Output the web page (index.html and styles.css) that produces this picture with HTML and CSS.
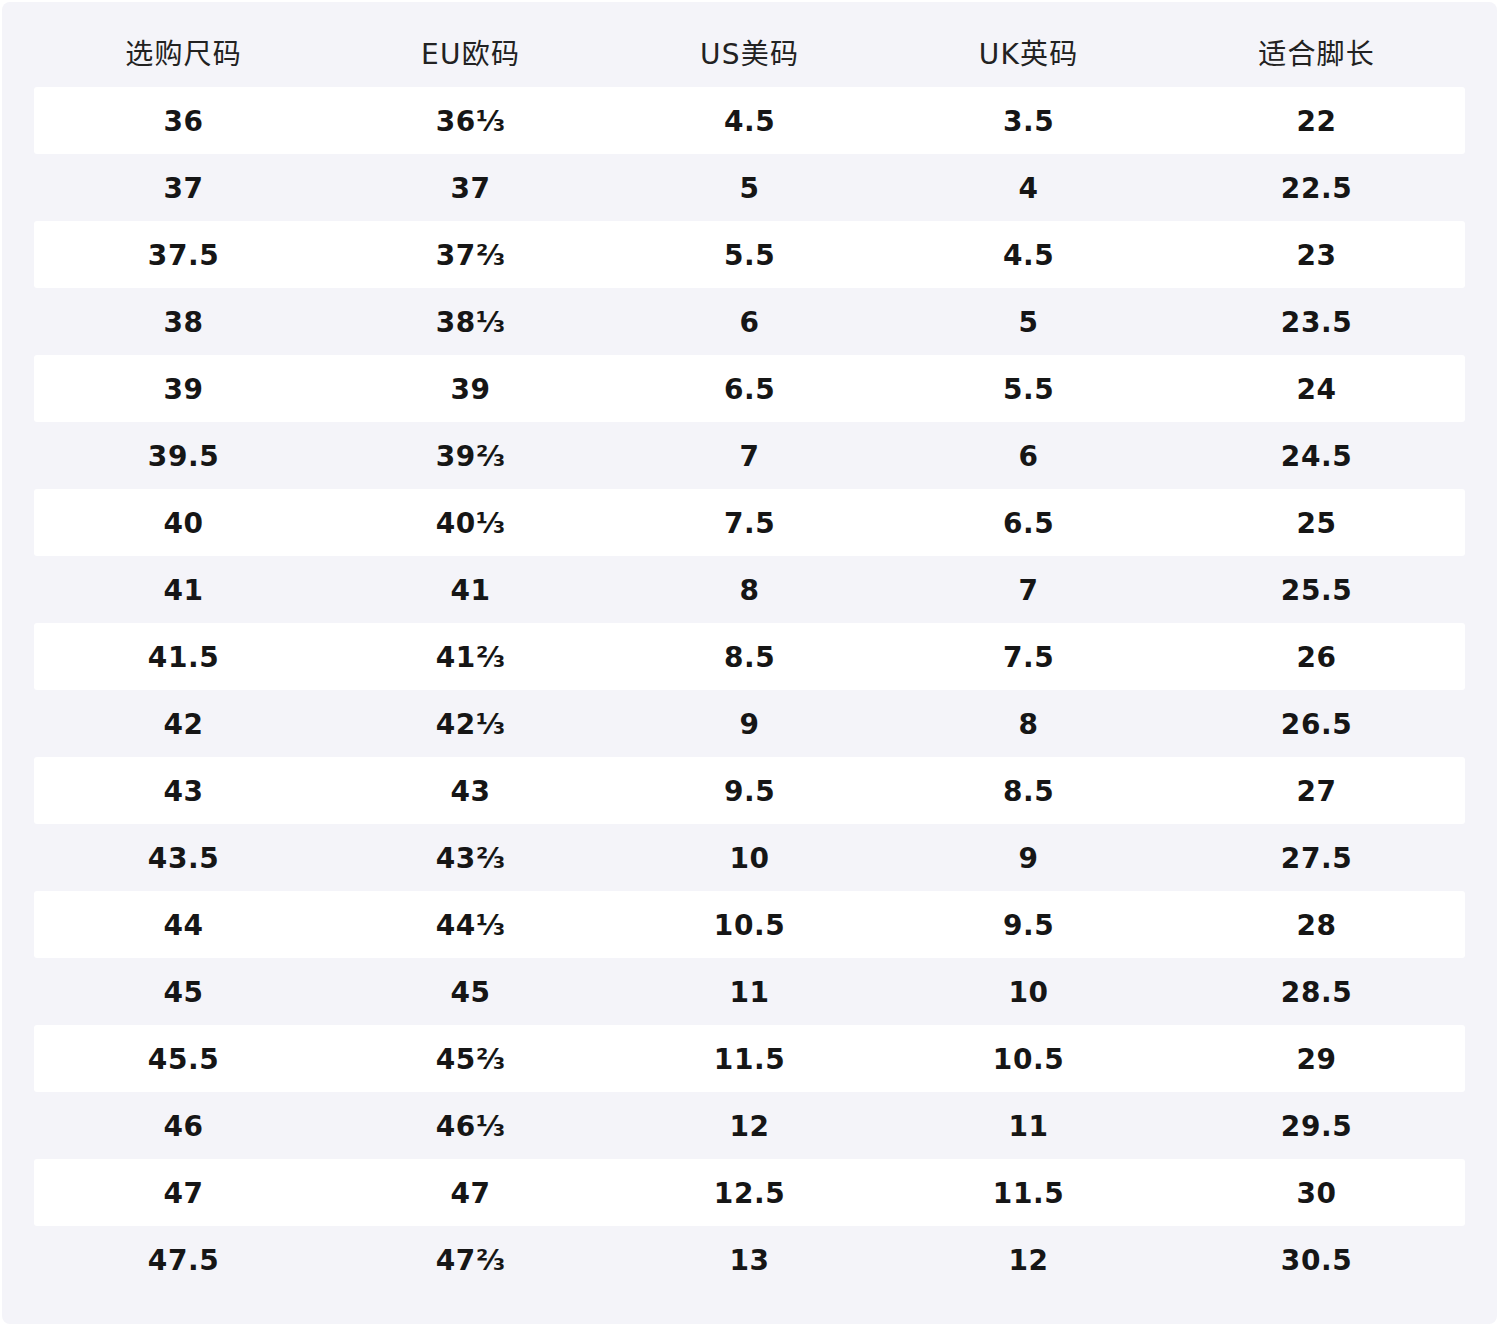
FILE: index.html
```html
<!DOCTYPE html>
<html lang="zh">
<head>
<meta charset="utf-8">
<title>尺码表</title>
<link rel="stylesheet" href="styles.css">
</head>
<body>
<div class="card">
  <div class="row head"><div>选购尺码</div><div>EU欧码</div><div>US美码</div><div>UK英码</div><div>适合脚长</div></div>
  <div class="row odd"><div>36</div><div>36⅓</div><div>4.5</div><div>3.5</div><div>22</div></div>
  <div class="row"><div>37</div><div>37</div><div>5</div><div>4</div><div>22.5</div></div>
  <div class="row odd"><div>37.5</div><div>37⅔</div><div>5.5</div><div>4.5</div><div>23</div></div>
  <div class="row"><div>38</div><div>38⅓</div><div>6</div><div>5</div><div>23.5</div></div>
  <div class="row odd"><div>39</div><div>39</div><div>6.5</div><div>5.5</div><div>24</div></div>
  <div class="row"><div>39.5</div><div>39⅔</div><div>7</div><div>6</div><div>24.5</div></div>
  <div class="row odd"><div>40</div><div>40⅓</div><div>7.5</div><div>6.5</div><div>25</div></div>
  <div class="row"><div>41</div><div>41</div><div>8</div><div>7</div><div>25.5</div></div>
  <div class="row odd"><div>41.5</div><div>41⅔</div><div>8.5</div><div>7.5</div><div>26</div></div>
  <div class="row"><div>42</div><div>42⅓</div><div>9</div><div>8</div><div>26.5</div></div>
  <div class="row odd"><div>43</div><div>43</div><div>9.5</div><div>8.5</div><div>27</div></div>
  <div class="row"><div>43.5</div><div>43⅔</div><div>10</div><div>9</div><div>27.5</div></div>
  <div class="row odd"><div>44</div><div>44⅓</div><div>10.5</div><div>9.5</div><div>28</div></div>
  <div class="row"><div>45</div><div>45</div><div>11</div><div>10</div><div>28.5</div></div>
  <div class="row odd"><div>45.5</div><div>45⅔</div><div>11.5</div><div>10.5</div><div>29</div></div>
  <div class="row"><div>46</div><div>46⅓</div><div>12</div><div>11</div><div>29.5</div></div>
  <div class="row odd"><div>47</div><div>47</div><div>12.5</div><div>11.5</div><div>30</div></div>
  <div class="row"><div>47.5</div><div>47⅔</div><div>13</div><div>12</div><div>30.5</div></div>
</div>
</body>
</html>
```
FILE: styles.css
```css
html, body {
  margin: 0;
  padding: 0;
  background: #ffffff;
}
body {
  padding: 2px 3px 3px 2px;
  font-family: "DejaVu Sans", "Noto Sans CJK SC", sans-serif;
}
.card {
  background: #f4f4f9;
  border-radius: 8px;
  padding: 18px 32px 31px 32px;
}
.row {
  display: grid;
  grid-template-columns: 298px 276px 282px 276px 300px;
  height: 67px;
  box-sizing: border-box;
  align-items: center;
  text-align: center;
  font-size: 28px;
  font-weight: bold;
  letter-spacing: 0.6px;
  padding-left: 0.6px;
  padding-top: 2px;
  color: #161616;
}
.row.odd {
  background: #ffffff;
  border-radius: 3px;
}
.row.head {
  font-weight: normal;
  color: #222222;
  font-size: 28px;
  letter-spacing: 1.2px;
  padding-top: 0;
  padding-bottom: 4px;
}
```
